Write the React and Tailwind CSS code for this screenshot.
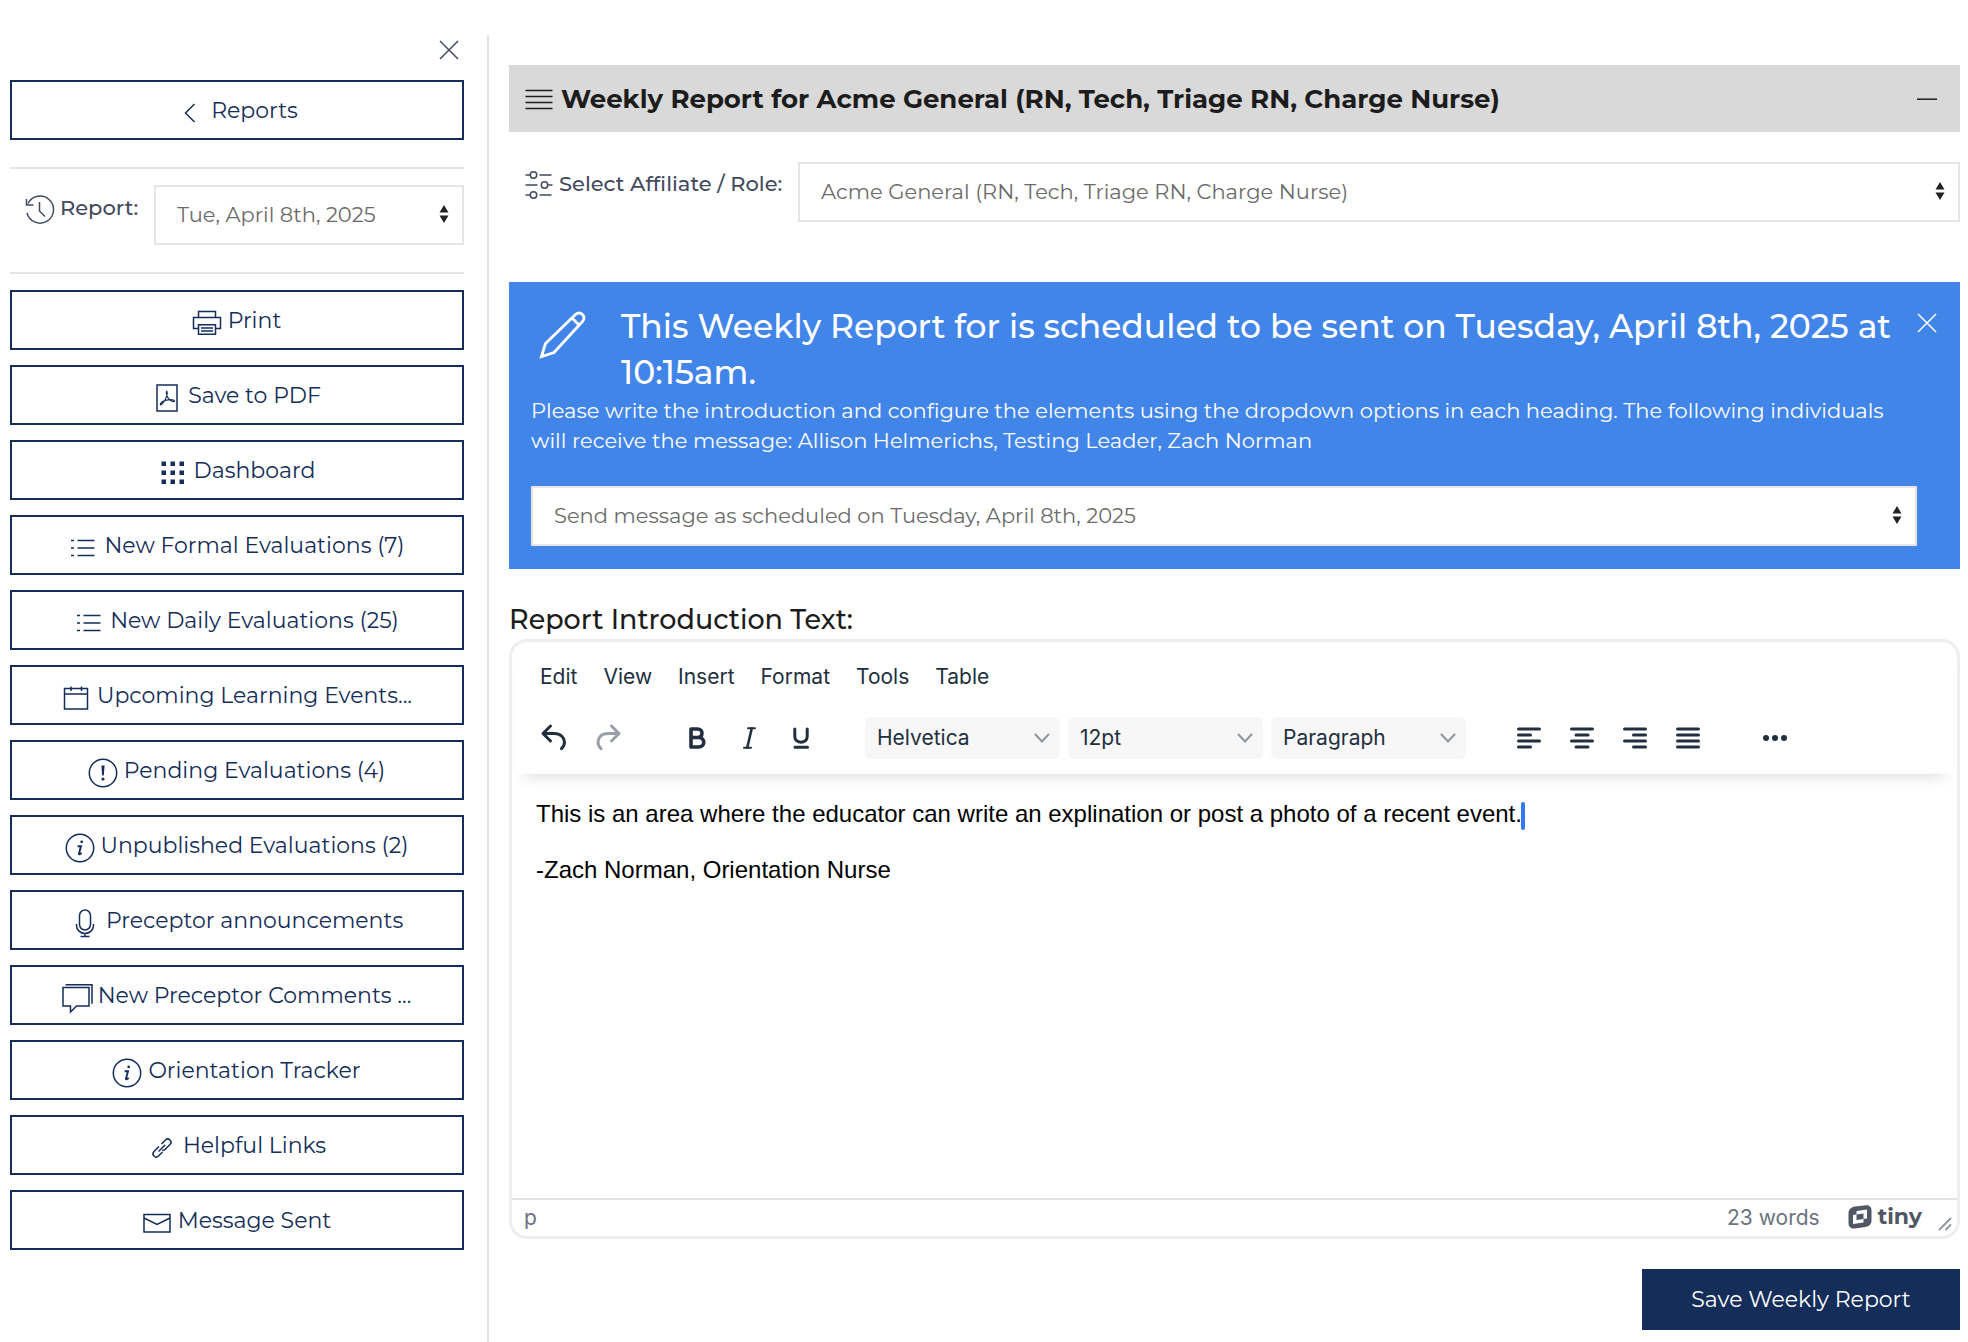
import React, { useState } from "react";

const Icon = ({ children, className = "mt-1.5" }) => (
  <svg
    viewBox="0 0 32 32"
    fill="none"
    stroke="currentColor"
    strokeWidth="1.5"
    aria-hidden="true"
    className={`size-8 shrink-0 ${className}`}
  >
    {children}
  </svg>
);

const icons = {
  back: <path d="M20.5 7l-9 9 9 9" />,
  print: (
    <>
      <path d="M7.5 10V4.5h17V10M7.5 21.5h-5v-11h27v11h-5" />
      <path d="M7.5 17.7h17v9.5h-17zM10 21h12M10 24h12" />
    </>
  ),
  pdf: (
    <>
      <path d="M6 3h20v26H6z" />
      <path
        d="M15.7 9.2c-1 .8 0 4.5 1.8 7.3 1.6 2.3 4.5 3.6 6 2.8.5-1.5-4.5-2.2-8-1.2-3.2.9-6.3 3-6.2 4.6 1.4.8 4.7-4.2 6-7.6.9-2.5 1.2-5 .4-5.9z"
        strokeWidth="1.2"
      />
    </>
  ),
  grid: (
    <path
      d="M4.5 4.5H9V9H4.5zM13.5 4.5H18V9h-4.5zM22.5 4.5H27V9h-4.5zM4.5 13.5H9V18H4.5zM13.5 13.5H18V18h-4.5zM22.5 13.5H27V18h-4.5zM4.5 22.5H9V27H4.5zM13.5 22.5H18V27h-4.5zM22.5 22.5H27V27h-4.5z"
      fill="currentColor"
      stroke="none"
    />
  ),
  list: (
    <>
      <path d="M10.5 8.5h17M10.5 16h17M10.5 23.5h17" />
      <path d="M4 8.5h3M4 16h3M4 23.5h3" />
    </>
  ),
  calendar: <path d="M4.5 6.5h23V27h-23zM4.5 12h23M11 4.5V9M21.5 4.5V9" />,
  alert: (
    <>
      <circle cx="16" cy="16" r="13.7" />
      <path d="M14.4 8.5h3.2l-.8 10h-1.6z" fill="currentColor" stroke="none" />
      <circle cx="16" cy="22" r="1.6" fill="currentColor" stroke="none" />
    </>
  ),
  info: (
    <>
      <circle cx="16" cy="16" r="13.7" />
      <circle cx="17.7" cy="9.8" r="1.4" fill="currentColor" stroke="none" />
      <path d="M13.6 14.2h3.4l-2 7.2c-.3 1 .3 1 .9.7l1.8-1.1" strokeWidth="1.9" />
    </>
  ),
  mic: (
    <>
      <rect x="10.5" y="3" width="11" height="20" rx="5.5" />
      <path d="M7.5 17v1.5a8.5 8 0 0 0 17 0V17M16 26.5v3M11.500 29.5h9" />
    </>
  ),
  comments: (
    <>
      <path d="M2 5.5h26V24H15.5l-6 6v-6H2z" />
      <path d="M4.5 2.7H31v19" />
    </>
  ),
  link: (
    <>
      <path d="M15.5 12l4-4A3.2 3.2 0 0 1 24 8a3.2 3.2 0 0 1 0 4.5l-5 5c-.8.8-1.8 1-2.8.8" />
      <path d="M16.5 20l-4 4A3.2 3.2 0 0 1 8 24a3.2 3.2 0 0 1 0-4.5l5-5" />
      <path d="M12.5 19.5L19 13" />
    </>
  ),
  mail: (
    <>
      <path d="M3 7.5h26V25H3z" />
      <path d="M3 11l13 6.5L29 11" />
    </>
  ),
};

const navItems = [
  { icon: "print", label: "Print" },
  { icon: "pdf", label: "Save to PDF" },
  { icon: "grid", label: "Dashboard" },
  { icon: "list", label: "New Formal Evaluations (7)" },
  { icon: "list", label: "New Daily Evaluations (25)" },
  { icon: "calendar", label: "Upcoming Learning Events..." },
  { icon: "alert", label: "Pending Evaluations (4)" },
  { icon: "info", label: "Unpublished Evaluations (2)" },
  { icon: "mic", label: "Preceptor announcements" },
  { icon: "comments", label: "New Preceptor Comments ..." },
  { icon: "info", label: "Orientation Tracker" },
  { icon: "link", label: "Helpful Links" },
  { icon: "mail", label: "Message Sent" },
];

const menus = ["Edit", "View", "Insert", "Format", "Tools", "Table"];

const alignments = [
  { name: "Align left", d: "M4.5 6h21M4.5 12h12M4.5 18h21M4.5 24h12" },
  { name: "Align center", d: "M4.5 6h21M9 12h12M4.5 18h21M9 24h12" },
  { name: "Align right", d: "M4.5 6h21M13.5 12h12M4.5 18h21M13.5 24h12" },
  { name: "Justify", d: "M4.5 6h21M4.5 12h21M4.5 18h21M4.5 24h21" },
];

function NavButton({ icon, label }) {
  return (
    <button
      type="button"
      className="flex h-15 w-full items-center justify-center gap-[5px] border-2 border-[#142d59] pr-0.5 text-[22px] text-[#142d59]"
    >
      <Icon>{icons[icon]}</Icon>
      <span className="truncate">{label}</span>
    </button>
  );
}

function SelectBox({ id, label, value, className = "" }) {
  return (
    <div className={`relative ${className}`}>
      <select
        id={id}
        aria-label={label}
        defaultValue={value}
        className="h-15 w-full appearance-none border-2 border-[#e5e5e5] bg-white pr-10 pl-[21px] text-[21px] text-[#6b6b6b]"
      >
        <option>{value}</option>
      </select>
      <svg
        viewBox="0 0 10 18"
        fill="#222222"
        aria-hidden="true"
        className="pointer-events-none absolute top-5 right-[15px] h-[18px] w-2.5"
      >
        <path d="M5 0l4.500 7.500h-9zM5 18l4.500-7.500h-9z" />
      </svg>
    </div>
  );
}

function ToolSelect({ label, value }) {
  return (
    <div className="relative w-[195px]">
      <select
        aria-label={label}
        defaultValue={value}
        className="h-[42px] w-full appearance-none rounded-md bg-[#f7f7f7] pl-3 text-[21px] text-[#222f3e]"
      >
        <option>{value}</option>
      </select>
      <svg
        viewBox="0 0 16 10"
        fill="none"
        stroke="#8f959d"
        strokeWidth="2"
        aria-hidden="true"
        className="pointer-events-none absolute top-4 right-2.5 h-2.5 w-4"
      >
        <path d="M1 1l7 7.5L15 1" />
      </svg>
    </div>
  );
}

function ToolButton({ label, children, className = "" }) {
  return (
    <button type="button" aria-label={label} className={`size-[30px] ${className}`}>
      <svg
        viewBox="0 0 30 30"
        fill="none"
        stroke="currentColor"
        strokeWidth="3"
        strokeLinecap="round"
        strokeLinejoin="round"
        className="size-full"
      >
        {children}
      </svg>
    </button>
  );
}

function Sidebar() {
  return (
    <aside className="w-[479px] shrink-0 border-r-2 border-[#e5e5e5] pr-[23px]">
      <div className="flex h-[45px] justify-end pr-[5px]">
        <button type="button" aria-label="Close menu" className="h-[30px] text-[#434a60]">
          <svg viewBox="0 0 20 20" stroke="currentColor" strokeWidth="1.5" className="size-5">
            <path d="M1 1l18 18M19 1L1 19" />
          </svg>
        </button>
      </div>
      <NavButton icon="back" label="Reports" />
      <div className="mt-[27px] mb-4 flex items-start border-y-2 border-[#e5e5e5] pt-4 pb-[27px]">
        <label
          htmlFor="report-date"
          className="flex h-[46px] w-36 items-center gap-1 pl-3.5 text-[21px] font-medium text-[#434a60]"
        >
          <Icon className="mt-1">
            <path d="M3 19a13.5 13.5 0 1 0 1-9.5M2.500 5v6h7M15.500 8v9l5.500 5.500" />
          </Icon>
          Report:
        </label>
        <SelectBox id="report-date" value="Tue, April 8th, 2025" className="flex-1" />
      </div>
      <nav className="flex flex-col gap-[15px]">
        {navItems.map((item) => (
          <NavButton key={item.label} icon={item.icon} label={item.label} />
        ))}
      </nav>
    </aside>
  );
}

function ScheduleBanner({ onClose }) {
  return (
    <section className="mt-15 flex items-start bg-[#4285e8] pt-[21px] pr-[23px] pb-[23px] pl-[22px] text-white">
      <div className="min-w-0 flex-1">
        <div className="flex items-start gap-[34px]">
          <svg
            viewBox="0 0 48 48"
            fill="none"
            stroke="currentColor"
            strokeWidth="2.8"
            aria-hidden="true"
            className="mt-2 ml-2 size-12 shrink-0"
          >
            <path d="M2.5 45.5l4-13L36.500 3.500c2-2 5-2 7 0s2 5 0 7L15 41.500zM33 7l7.500 7.500" />
          </svg>
          <h2 className="text-[33px] leading-[46px] font-medium">
            This Weekly Report for is scheduled to be sent on Tuesday, April 8th, 2025 at 10:15am.
          </h2>
        </div>
        <p className="pt-px text-[21px] leading-[30px]">
          Please write the introduction and configure the elements using the dropdown options in
          each heading. The following individuals will receive the message: Allison Helmerichs,
          Testing Leader, Zach Norman
        </p>
        <SelectBox
          label="Delivery"
          value="Send message as scheduled on Tuesday, April 8th, 2025"
          className="mt-[30px]"
        />
      </div>
      <button type="button" aria-label="Dismiss" onClick={onClose} className="mt-2.5">
        <svg viewBox="0 0 20 20" stroke="currentColor" strokeWidth="1.5" className="size-5">
          <path d="M1 1l18 18M19 1L1 19" />
        </svg>
      </button>
    </section>
  );
}

function Editor() {
  return (
    <div className="flex h-[600px] flex-col overflow-hidden rounded-[18px] border-3 border-[#eeeeee] font-[Inter,sans-serif] text-[#222f3e]">
      <div className="mx-1 pb-2.5 pl-6 shadow-[0_12px_14px_-10px_rgba(34,47,62,0.18)]">
        <div className="flex h-[70px] items-center gap-[26px] text-[21px]">
          {menus.map((menu) => (
            <button key={menu} type="button">
              {menu}
            </button>
          ))}
        </div>
        <div className="flex h-[52px] items-center">
          <ToolButton label="Undo">
            <path d="M10.500 3L3 10.500l7.500 7.500M3 10.500h11c7 0 10.500 4.500 10.500 8.500 0 3-1.200 5-3 6.700" />
          </ToolButton>
          <ToolButton label="Redo" className="ml-6 text-[#9a9fa7]">
            <path d="M17.500 3L25 10.500 17.500 18M25 10.500H14C7 10.500 4 15 4 19c0 3 1.200 5 3 6.700" />
          </ToolButton>
          <ToolButton label="Bold" className="ml-[58px]">
            <path
              d="M9 6h6.500c6 0 6 8.500 0 8.500H9zM9 14.500h7.500c7 0 7 9.500 0 9.500H9z"
              strokeWidth="3.6"
            />
          </ToolButton>
          <ToolButton label="Italic" className="ml-[22px]">
            <path d="M14 5.300h7M10 24.700h7" strokeWidth="2" />
            <path d="M17.700 5.500l-4.400 19" strokeWidth="2.600" />
          </ToolButton>
          <ToolButton label="Underline" className="ml-[22px]">
            <path d="M8.800 6v7.500c0 7.500 12.400 7.500 12.400 0V6M9 24.200h12.500" />
          </ToolButton>
          <div className="ml-[49px] flex gap-2">
            <ToolSelect label="Font" value="Helvetica" />
            <ToolSelect label="Font size" value="12pt" />
            <ToolSelect label="Block" value="Paragraph" />
          </div>
          <div className="ml-12 flex gap-[23px]">
            {alignments.map((item) => (
              <ToolButton key={item.name} label={item.name}>
                <path d={item.d} />
              </ToolButton>
            ))}
          </div>
          <ToolButton label="More" className="ml-[57px]">
            <path d="M6 15h.01M15 15h.01M24 15h.01" strokeWidth="6" />
          </ToolButton>
        </div>
      </div>
      <div
        role="textbox"
        aria-label="Report introduction"
        contentEditable
        suppressContentEditableWarning
        className="flex-1 px-6 pt-6 font-['Liberation_Sans',Arial,sans-serif] text-2xl leading-8 text-black"
      >
        <p>
          This is an area where the educator can write an explination or post a photo of a recent
          event.
          <span className="-ml-px inline-block h-7 w-1 rounded-sm bg-[#3478f6] align-middle" />
        </p>
        <p className="mt-6">-Zach Norman, Orientation Nurse</p>
      </div>
      <div className="flex h-[38px] items-center border-t-2 border-[#e3e3e3] pl-3 text-[21px] text-[#6b7280]">
        <span className="flex-1">p</span>
        <span>23 words</span>
        <a
          href="#tiny"
          aria-label="Powered by Tiny"
          className="ml-7 flex items-center gap-1.5 pb-0.5 text-[#4f5864]"
        >
          <svg viewBox="0 0 24 24" fill="currentColor" className="size-6">
            <path
              fillRule="evenodd"
              d="M7 1.500L18 .2c3-.3 5.500 1.800 5.500 5V15c0 4-2 6.300-6 6.900L7 23.500c-4 .5-6.500-1.700-6.500-5.500V8.500c0-4 2.500-6.500 6.500-7zM8.500 6v3.500L5 10v9l10.500-1.500V14l3.500-.5V4.500zM8.500 9.500l7-1V14l-7 1z"
            />
            <path d="M10.300 10.500l3.500-.5v3l-3.500.5z" />
          </svg>
          <span className="font-['Montserrat',Inter,sans-serif] text-[22px] leading-6 font-bold">
            tiny
          </span>
        </a>
        <svg
          viewBox="0 0 14 14"
          stroke="#8f959d"
          strokeWidth="1.8"
          aria-hidden="true"
          className="mt-3 mr-[5px] ml-4 size-3.5"
        >
          <path d="M1 13L13 1M7.500 13L13 7.500" />
        </svg>
      </div>
    </div>
  );
}

export default function App() {
  const [showBanner, setShowBanner] = useState(true);

  return (
    <div className="flex min-h-screen flex-col bg-white pt-[35px] pr-2 pl-2.5 font-['Montserrat',Inter,sans-serif]">
      <div className="flex flex-1">
        <Sidebar />
        <main className="min-w-0 flex-1 pt-[30px] pl-5">
          <header className="flex h-[67px] items-center bg-[#d9d9d9] pr-[23px] pl-3.5 text-[#1c1c1c]">
            <Icon className="mt-0.5">
              <path d="M2.500 6.500h27M2.500 12.500h27M2.500 18.500h27M2.500 24.500h27" />
            </Icon>
            <h1 className="flex-1 pt-0.5 pl-1.5 text-[26px] font-bold">
              Weekly Report for Acme General (RN, Tech, Triage RN, Charge Nurse)
            </h1>
            <button type="button" aria-label="Collapse" className="w-5">
              <svg viewBox="0 0 20 20" stroke="currentColor" strokeWidth="1.5" className="size-5">
                <path d="M0 10.200h20" />
              </svg>
            </button>
          </header>

          <div className="mt-[30px] flex items-start">
            <label
              htmlFor="affiliate"
              className="flex h-11 w-[289px] shrink-0 items-center gap-1 pl-3.5 text-[21px] font-medium whitespace-nowrap text-[#434a60]"
            >
              <Icon className="mt-0.5">
                <circle cx="10.500" cy="6" r="3.200" />
                <circle cx="21.500" cy="16" r="3.200" />
                <circle cx="10.500" cy="26" r="3.200" />
                <path d="M2.500 6h4.800M16.500 6h12M2.500 16h12M24.700 16h4.800M2.500 26h4.800M16.500 26h12" />
              </Icon>
              Select Affiliate / Role:
            </label>
            <SelectBox
              id="affiliate"
              value="Acme General (RN, Tech, Triage RN, Charge Nurse)"
              className="flex-1"
            />
          </div>

          {showBanner && <ScheduleBanner onClose={() => setShowBanner(false)} />}

          <h3 className="mt-8 text-[27px] leading-[38px] font-medium text-[#1c1c1c]">
            Report Introduction Text:
          </h3>
          <Editor />

          <div className="mt-[30px] flex justify-end">
            <button type="button" className="h-[61px] w-[318px] bg-[#142d59] text-[22px] text-white">
              Save Weekly Report
            </button>
          </div>
        </main>
      </div>
    </div>
  );
}
